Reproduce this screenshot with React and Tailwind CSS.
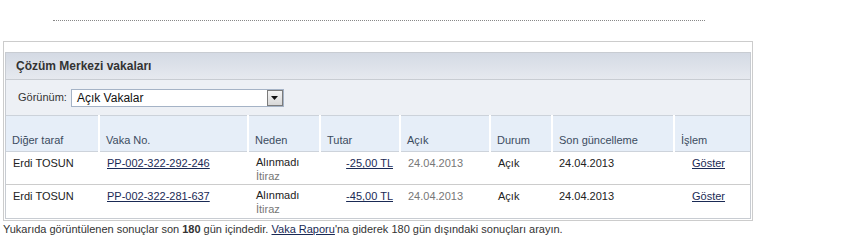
const rows = [
  { party: "Erdi TOSUN", id: "PP-002-322-292-246", amount: "-25,00 TL" },
  { party: "Erdi TOSUN", id: "PP-002-322-281-637", amount: "-45,00 TL" },
];

const cols = [
  { label: "Diğer taraf", w: "w-[93px]" },
  { label: "Vaka No.", w: "w-[149px]" },
  { label: "Neden", w: "w-[72px]" },
  { label: "Tutar", w: "w-[80px]" },
  { label: "Açık", w: "w-[90px]" },
  { label: "Durum", w: "w-[62px]" },
  { label: "Son güncelleme", w: "w-[122px]" },
  { label: "İşlem", w: "w-[76px]" },
];

export default function App() {
  return (
    <div className="w-[852px] h-[252px] bg-white font-['Liberation_Sans',Arial,sans-serif] text-[11px] text-[#222]">
      <div className="pt-[20px] pl-[53px]">
        <div className="w-[652px] border-t border-dotted border-[#888]" />
      </div>

      <div className="mt-[20px] ml-[3px] w-[750px] border border-[#ccc] pt-[10px] pl-[1px] pr-[1px] pb-[1px]">
        <div className="border border-[#c8ccd2]">
          <div className="h-[27px] flex items-center pl-[10px] bg-gradient-to-b from-[#d4dae4] to-[#e6e9ef] border-b border-[#c8ccd2] text-[12px] font-bold text-[#333]">
            Çözüm Merkezi vakaları
          </div>
          <div className="h-[35px] flex items-center pl-[12px] bg-[#edf0f5] text-[#333]">
            <span>Görünüm:</span>
            <div className="ml-[4px] w-[213px] h-[18px] border border-[#a5b3c6] bg-white flex items-center">
              <span className="flex-1 pl-[5px] text-[12px] text-[#111]">Açık Vakalar</span>
              <div className="w-[16px] h-[16px] border border-[#7c7c7c] bg-gradient-to-b from-[#f4f4f4] to-[#d8d8d8] flex items-center justify-center">
                <svg width="7" height="4" viewBox="0 0 7 4">
                  <path d="M0 0h7L3.5 4z" fill="#111" />
                </svg>
              </div>
            </div>
          </div>

          <table className="w-full border-collapse border-t border-[#ccd2da]">
            <thead>
              <tr className="h-[36px] bg-[#e6eef8] text-[#3b4c60]">
                {cols.map((c, i) => (
                  <th
                    key={c.label}
                    className={`${c.w} text-left font-normal pl-[6px] pt-[13px] border-b border-[#cdd3db] ${i > 0 ? "border-l-2 border-l-white" : ""}`}
                  >
                    {c.label}
                  </th>
                ))}
              </tr>
            </thead>
            <tbody>
              {rows.map((r, idx) => (
                <tr key={r.id} className={`h-[33px] align-top ${idx === 0 ? "border-b border-[#ccc]" : ""}`}>
                  <td className="pl-[7px] pt-[3px]">{r.party}</td>
                  <td className="pl-[8px] pt-[3px]">
                    <a href="#" className="underline text-[#1a2a55]">{r.id}</a>
                  </td>
                  <td className="pl-[8px] pt-[3px] leading-[14px]">
                    <div>Alınmadı</div>
                    <div className="text-[#777]">İtiraz</div>
                  </td>
                  <td className="pr-[7px] pt-[3px] text-right">
                    <a href="#" className="underline text-[#1a2a55]">{r.amount}</a>
                  </td>
                  <td className="pl-[8px] pt-[3px] text-[#777]">24.04.2013</td>
                  <td className="pl-[8px] pt-[3px]">Açık</td>
                  <td className="pl-[7px] pt-[3px]">24.04.2013</td>
                  <td className="pl-[18px] pt-[3px]">
                    <a href="#" className="underline text-[#1a2a55]">Göster</a>
                  </td>
                </tr>
              ))}
            </tbody>
          </table>
        </div>
      </div>

      <p className="pl-[3px] text-[#333]">
        Yukarıda görüntülenen sonuçlar son <b>180</b> gün içindedir.{" "}
        <a href="#" className="underline text-[#1a2a55]">Vaka Raporu</a>'na giderek 180 gün dışındaki sonuçları arayın.
      </p>
    </div>
  );
}
